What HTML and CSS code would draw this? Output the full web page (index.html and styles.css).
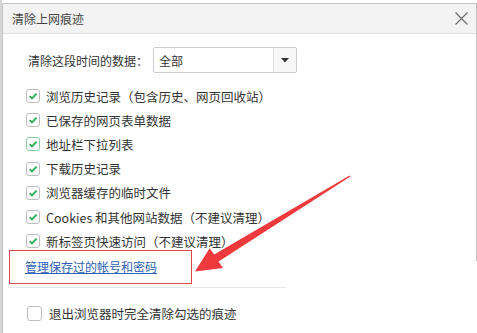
FILE: index.html
```html
<!DOCTYPE html>
<html lang="zh-CN">
<head>
<meta charset="utf-8">
<title>清除上网痕迹</title>
<link rel="stylesheet" href="styles.css">
</head>
<body>
<div class="screen">
  <div class="strip"></div>
  <div class="dialog">
    <div class="header">
      <span class="title">清除上网痕迹</span>
      <svg class="close" width="13" height="13" viewBox="0 0 13 13"><path d="M0.5 0.5 L12.5 12.5 M12.5 0.5 L0.5 12.5" stroke="#6a6a6a" stroke-width="1.1" fill="none"/></svg>
    </div>
    <div class="content">
      <div class="time-row">
        <span class="label">清除这段时间的数据：</span>
        <div class="select">
          <span class="select-value">全部</span>
          <span class="select-btn"><svg width="8" height="5" viewBox="0 0 8 5"><path d="M0 0 H8 L4 4.5 Z" fill="#333"/></svg></span>
        </div>
      </div>
      <ul class="list">
        <li class="row"><span class="box checked"><svg width="12" height="12" viewBox="0 0 12 12"><path d="M2.6 6.2 L5 8.5 L9.6 3.6" stroke="#2fb45c" stroke-width="1.9" fill="none"/></svg></span>浏览历史记录（包含历史、网页回收站）</li>
        <li class="row"><span class="box checked"><svg width="12" height="12" viewBox="0 0 12 12"><path d="M2.6 6.2 L5 8.5 L9.6 3.6" stroke="#2fb45c" stroke-width="1.9" fill="none"/></svg></span>已保存的网页表单数据</li>
        <li class="row"><span class="box checked focus"><svg width="12" height="12" viewBox="0 0 12 12"><path d="M2.6 6.2 L5 8.5 L9.6 3.6" stroke="#2fb45c" stroke-width="1.9" fill="none"/></svg></span>地址栏下拉列表</li>
        <li class="row"><span class="box checked"><svg width="12" height="12" viewBox="0 0 12 12"><path d="M2.6 6.2 L5 8.5 L9.6 3.6" stroke="#2fb45c" stroke-width="1.9" fill="none"/></svg></span>下载历史记录</li>
        <li class="row"><span class="box checked"><svg width="12" height="12" viewBox="0 0 12 12"><path d="M2.6 6.2 L5 8.5 L9.6 3.6" stroke="#2fb45c" stroke-width="1.9" fill="none"/></svg></span>浏览器缓存的临时文件</li>
        <li class="row"><span class="box checked"><svg width="12" height="12" viewBox="0 0 12 12"><path d="M2.6 6.2 L5 8.5 L9.6 3.6" stroke="#2fb45c" stroke-width="1.9" fill="none"/></svg></span>Cookies 和其他网站数据（不建议清理）</li>
        <li class="row"><span class="box checked"><svg width="12" height="12" viewBox="0 0 12 12"><path d="M2.6 6.2 L5 8.5 L9.6 3.6" stroke="#2fb45c" stroke-width="1.9" fill="none"/></svg></span>新标签页快速访问（不建议清理）</li>
      </ul>
      <div class="link-box"><a class="link" href="#">管理保存过的帐号和密码</a></div>
      <div class="sep"></div>
      <div class="row bottom-row"><span class="box"></span>退出浏览器时完全清除勾选的痕迹</div>
    </div>
  </div>
</div>
<svg class="arrow" width="477" height="333" viewBox="0 0 477 333">
  <polygon points="350.4,176.6 218.6,261.4 223,268 195,271.5 209.6,248.3 214.2,254.6 349.6,175.4" fill="#ee3a3c"/>
</svg>
</body>
</html>
```
FILE: styles.css
```css
html, body {
  margin: 0;
  padding: 0;
  background: #ffffff;
  overflow: hidden;
  width: 477px;
  height: 333px;
}
body {
  font-family: "Noto Sans CJK SC", "Noto Sans", sans-serif;
  font-size: 12px;
  color: #333333;
  position: relative;
  text-spacing-trim: space-all;
}
.screen {
  display: flex;
  height: 333px;
}
.strip {
  width: 2px;
  background: #d6d6d6;
  flex: none;
}
.dialog {
  flex: 1;
  margin-top: 3px;
  margin-right: 1px;
  border-left: 1px solid #c4c4c4;
  border-top: 1px solid #c4c4c4;
  position: relative;
  min-height: 340px;
}
.dialog::after {
  content: "";
  position: absolute;
  right: -1px;
  top: -1px;
  width: 1px;
  height: 258px;
  background: #c4c4c4;
}
.header {
  height: 29px;
  background: #f3f3f3;
  border-bottom: 1px solid #dedede;
  display: flex;
  align-items: center;
  justify-content: space-between;
  padding: 0 8px 0 9px;
}
.title {
  font-size: 12px;
  color: #444;
}
.close {
  display: block;
}
.content {
  display: flex;
  flex-direction: column;
  align-items: flex-start;
}
.time-row {
  display: flex;
  align-items: center;
  margin-top: 13px;
  padding-left: 25px;
}
.label {
  width: 125px;
  white-space: nowrap;
}
.select {
  width: 142px;
  height: 24px;
  border: 1px solid #cccccc;
  border-radius: 2px;
  display: flex;
  align-items: center;
  justify-content: space-between;
}
.select-value {
  padding-left: 5px;
}
.select-btn {
  width: 22px;
  height: 24px;
  border-left: 1px solid #dddddd;
  background: #f7f7f7;
  display: flex;
  align-items: center;
  justify-content: center;
}
.list {
  list-style: none;
  margin: 11px 0 0 0;
  padding: 0 0 0 23px;
}
.row {
  height: 24.2px;
  display: flex;
  align-items: center;
  font-size: 12.5px;
  white-space: nowrap;
}
.box {
  width: 12px;
  height: 12px;
  border: 1px solid #bdbdbd;
  border-radius: 3px;
  margin-right: 6px;
  display: flex;
  align-items: center;
  justify-content: center;
  background: #fff;
  flex: none;
}
.box.focus {
  border-color: #8ccf9f;
}
.link-box {
  margin-top: -3px;
  margin-left: 6px;
  width: 166px;
  border: 1px solid #d8474a;
  padding: 9px 0 9px 15px;
  line-height: 14px;
}
.link {
  color: #2d5fb3;
  text-decoration: underline;
  font-size: 12px;
}
.sep {
  margin-top: 3px;
  margin-left: 5px;
  width: 278px;
  height: 1px;
  background: #e6e6e6;
}
.bottom-row {
  margin-top: 13px;
  padding-left: 24px;
}
.bottom-row .box {
  width: 13px;
  height: 13px;
  margin-right: 7px;
}
.arrow {
  position: absolute;
  left: 0;
  top: 0;
  pointer-events: none;
}
```
